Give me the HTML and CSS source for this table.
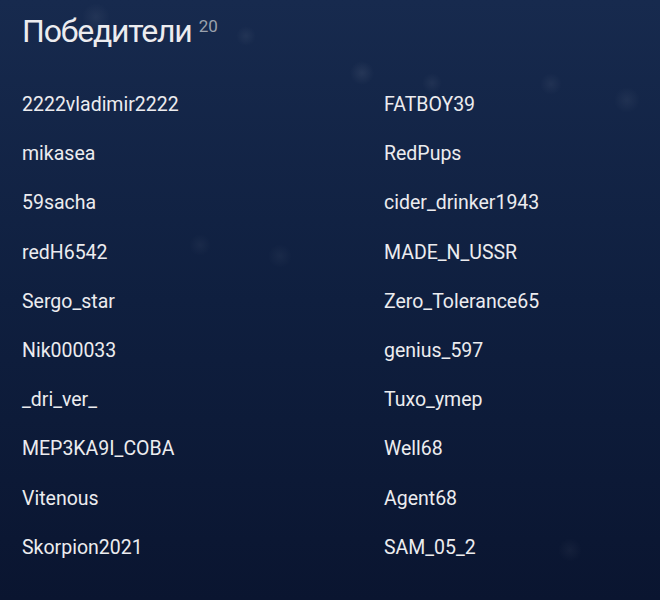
FILE: index.html
```html
<!DOCTYPE html>
<html lang="ru">
<head>
  <meta charset="UTF-8" />
  <title>Победители</title>
  <link rel="stylesheet" href="styles.css">
</head>
<body>
  <!-- Блок победителей -->
  <div class="winners">
    <h1 class="title">Победители<sup class="count">20</sup></h1>
    <ul class="list">
      <li>2222vladimir2222</li>
      <li>FATBOY39</li>
      <li>mikasea</li>
      <li>RedPups</li>
      <li>59sacha</li>
      <li>cider_drinker1943</li>
      <li>redH6542</li>
      <li>MADE_N_USSR</li>
      <li>Sergo_star</li>
      <li>Zero_Tolerance65</li>
      <li>Nik000033</li>
      <li>genius_597</li>
      <li>_dri_ver_</li>
      <li>Tuxo_ymep</li>
      <li>MEP3KA9I_COBA</li>
      <li>Well68</li>
      <li>Vitenous</li>
      <li>Agent68</li>
      <li>Skorpion2021</li>
      <li>SAM_05_2</li>
    </ul>
  </div>
</body>
</html>
```

FILE: styles.css
```css
/* Общий фон */
html, body {
  margin: 0;
  height: 100%;
}

body {
  font-family: Roboto, "Noto Sans", sans-serif;
  color: #ececef;
  background-color: #0d1a36;
  background-image:
    radial-gradient(circle at 362px 73px, rgba(255,255,255,0.07) 0, rgba(255,255,255,0) 12px),
    radial-gradient(circle at 96px 17px, rgba(255,255,255,0.05) 0, rgba(255,255,255,0) 14px),
    radial-gradient(circle at 246px 36px, rgba(255,255,255,0.05) 0, rgba(255,255,255,0) 10px),
    radial-gradient(circle at 627px 100px, rgba(255,255,255,0.05) 0, rgba(255,255,255,0) 13px),
    radial-gradient(circle at 551px 84px, rgba(255,255,255,0.05) 0, rgba(255,255,255,0) 11px),
    radial-gradient(circle at 432px 83px, rgba(255,255,255,0.05) 0, rgba(255,255,255,0) 10px),
    radial-gradient(circle at 280px 256px, rgba(255,255,255,0.04) 0, rgba(255,255,255,0) 12px),
    radial-gradient(circle at 200px 245px, rgba(255,255,255,0.04) 0, rgba(255,255,255,0) 11px),
    radial-gradient(circle at 570px 550px, rgba(255,255,255,0.04) 0, rgba(255,255,255,0) 12px),
    linear-gradient(180deg, #172a4e 0%, #0f1f3f 50%, #0a1530 100%);
}

.winners {
  padding: 12px 0 0 22px;
}

.title {
  margin: 0;
  font-size: 32px;
  font-weight: 400;
  letter-spacing: -1.2px;
  line-height: 38px;
  color: #ececef;
}

.count {
  font-size: 17px;
  letter-spacing: 0;
  color: #9aa1ad;
  margin-left: 7px;
  vertical-align: top;
  position: relative;
  top: -5px;
}

/* Две колонки имён */
.list {
  list-style: none;
  margin: 30px 0 0;
  padding: 0;
  display: grid;
  grid-template-columns: 362px 1fr;
}

.list li {
  font-size: 19.5px;
  line-height: 49.2px;
}
```
